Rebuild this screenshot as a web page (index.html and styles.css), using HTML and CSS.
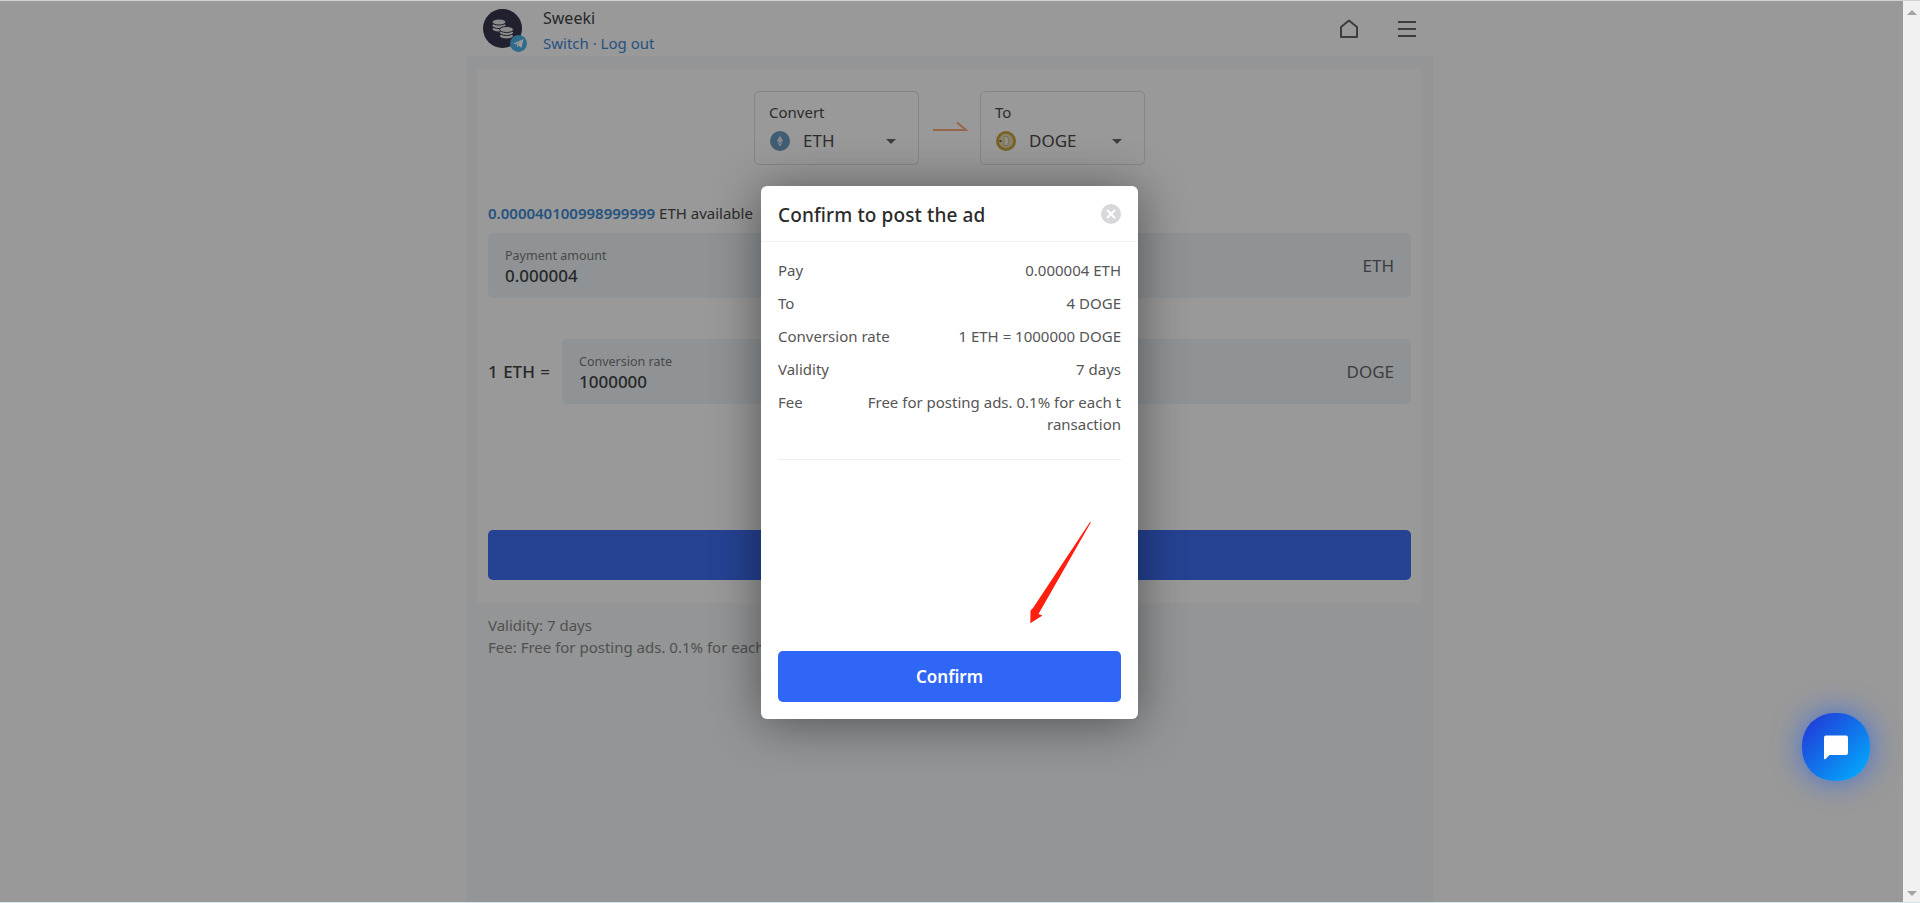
FILE: index.html
```html
<!DOCTYPE html>
<html lang="en">
<head>
    <meta charset="UTF-8">
    <meta name="viewport" content="width=device-width, initial-scale=1.0">
    <title>Confirm to post the ad</title>
    <link rel="stylesheet" href="styles.css">
</head>
<body>
    <div class="window">
        <div class="page">
            <div class="column">
                <header class="header">
                    <div class="user">
                        <div class="avatar">
                            <svg width="39" height="39" viewBox="0 0 39 39">
                                <circle cx="19.5" cy="19.5" r="19.5" fill="#36364f"/>
                                <g fill="#e8e8e8" stroke="#36364f" stroke-width="1">
                                    <ellipse cx="16" cy="20" rx="7" ry="3"/>
                                    <ellipse cx="16" cy="16.5" rx="7" ry="3"/>
                                    <ellipse cx="16" cy="13" rx="7" ry="3"/>
                                    <ellipse cx="23.5" cy="27" rx="7" ry="3"/>
                                    <ellipse cx="23.5" cy="23.5" rx="7" ry="3"/>
                                    <ellipse cx="23.5" cy="20.5" rx="7" ry="3"/>
                                </g>
                            </svg>
                            <span class="badge">
                                <svg width="11" height="11" viewBox="0 0 11 11"><path d="M0.5 5.5 L10.5 1 L8.5 10 L5.5 7.6 L4.2 9.2 L3.9 6.6 L8 3 L2.9 6.4 Z" fill="#fff"/></svg>
                            </span>
                        </div>
                        <div class="user-text">
                            <div class="user-name">Sweeki</div>
                            <div class="user-links"><a>Switch</a> · <a>Log out</a></div>
                        </div>
                    </div>
                    <div class="header-icons">
                        <svg width="18" height="20" viewBox="0 0 18 20" fill="none" stroke="#666" stroke-width="2" stroke-linejoin="round"><path d="M1 8 L9 1.5 L17 8 V18 H1 Z"/></svg>
                        <svg width="18" height="16" viewBox="0 0 18 16" stroke="#666" stroke-width="2"><path d="M0 1 H18 M0 8 H18 M0 15 H18"/></svg>
                    </div>
                </header>

                <div class="card">
                    <div class="pair">
                        <div class="select-box">
                            <div class="select-label">Convert</div>
                            <div class="select-value">
                                <svg class="coin" width="20" height="20" viewBox="0 0 20 20">
                                    <circle cx="10" cy="10" r="10" fill="#6b9cc0"/>
                                    <path d="M10 4.5 L13.2 10 L10 12 L6.8 10 Z M10 12.8 L12.8 11.2 L10 15.5 L7.2 11.2 Z" fill="#dfe7ec"/>
                                </svg>
                                <span class="coin-name">ETH</span>
                                <span class="caret"></span>
                            </div>
                        </div>
                        <svg class="pair-arrow" width="61" height="16" viewBox="0 0 61 16" fill="none" stroke="#f9ab78" stroke-width="2"><path d="M14 12 H47 L38 4.5"/></svg>
                        <div class="select-box">
                            <div class="select-label">To</div>
                            <div class="select-value">
                                <svg class="coin" width="20" height="20" viewBox="0 0 20 20">
                                    <circle cx="10" cy="10" r="10" fill="#c9a53f"/>
                                    <circle cx="10" cy="10" r="7.2" fill="#e6dcb8"/>
                                    <rect x="3.5" y="9" width="2" height="2" fill="#6b6038"/>
                                    <path d="M8 5.5 H11.5 Q14.5 10 11.5 14.5 H8 Z" fill="#f3eeda" stroke="#cdbb80" stroke-width="1"/>
                                </svg>
                                <span class="coin-name">DOGE</span>
                                <span class="caret"></span>
                            </div>
                        </div>
                    </div>

                    <div class="balance"><span class="balance-num">0.000040100998999999</span> ETH available</div>

                    <div class="field">
                        <div class="field-text">
                            <div class="field-label">Payment amount</div>
                            <div class="field-value">0.000004</div>
                        </div>
                        <span class="field-unit">ETH</span>
                    </div>

                    <div class="rate-row">
                        <span class="rate-text">1 ETH =</span>
                        <div class="field">
                            <div class="field-text">
                                <div class="field-label">Conversion rate</div>
                                <div class="field-value">1000000</div>
                            </div>
                            <span class="field-unit">DOGE</span>
                        </div>
                    </div>

                    <button class="main-btn">Post</button>
                </div>

                <div class="notes">
                    <div>Validity: 7 days</div>
                    <div>Fee: Free for posting ads. 0.1% for each transaction</div>
                </div>
            </div>

            <div class="overlay">
                <div class="modal">
                    <div class="modal-head">
                        <span class="modal-title">Confirm to post the ad</span>
                        <span class="close">
                            <svg width="10" height="10" viewBox="0 0 10 10" stroke="#fff" stroke-width="2"><path d="M1 1 L9 9 M9 1 L1 9"/></svg>
                        </span>
                    </div>
                    <div class="modal-body">
                        <div class="info-list">
                            <div class="info-row"><span>Pay</span><span>0.000004 ETH</span></div>
                            <div class="info-row"><span>To</span><span>4 DOGE</span></div>
                            <div class="info-row"><span>Conversion rate</span><span>1 ETH = 1000000 DOGE</span></div>
                            <div class="info-row"><span>Validity</span><span>7 days</span></div>
                            <div class="info-row"><span>Fee</span><span class="info-fee">Free for posting ads. 0.1% for each transaction</span></div>
                        </div>
                        <button class="confirm-btn">Confirm</button>
                    </div>
                    <svg class="red-arrow" width="64" height="104" viewBox="0 0 64 104"><path d="M61 0 L4 86 L1.5 88.5 L1.3 101.3 L13.5 93.5 L9.5 92 L61.8 0.6 Z" fill="#ff1f0f"/></svg>
                </div>
            </div>

            <div class="chat">
                <svg width="26" height="25" viewBox="0 0 26 25"><path d="M3 0.5 H23 Q25 0.5 25 2.5 V18 Q25 20 23 20 H6.5 L2.5 24 Q1 25 1 23 V2.5 Q1 0.5 3 0.5 Z" fill="#fff"/></svg>
            </div>
        </div>
        <aside class="scrollbar">
            <span class="scroll-up"></span>
            <span class="scroll-down"></span>
        </aside>
    </div>
</body>
</html>
```

FILE: styles.css
```css
* {
    box-sizing: border-box;
}
body {
    margin: 0;
    height: 903px;
    overflow: hidden;
    font-family: "Noto Sans", Arial, sans-serif;
    font-size: 15px;
    color: #4a4a4a;
    background-color: #fff;
}
.window {
    display: flex;
    height: 903px;
    border-top: 1px solid #d2d2d2;
    border-bottom: 1px solid #d5e6ef;
}
.page {
    position: relative;
    flex: 1;
    overflow: hidden;
}
.scrollbar {
    width: 17px;
    background-color: #f1f1f1;
    display: flex;
    flex-direction: column;
    justify-content: space-between;
    align-items: center;
    padding: 9px 0 6px;
}
.scroll-up, .scroll-down {
    width: 0;
    height: 0;
    border-left: 5px solid transparent;
    border-right: 5px solid transparent;
}
.scroll-up {
    border-bottom: 5px solid #a3a3a3;
}
.scroll-down {
    border-top: 5px solid #a3a3a3;
}
.column {
    width: 967px;
    height: 100%;
    margin-left: 466px;
    background-color: #f5f8fa;
}
.header {
    display: flex;
    justify-content: space-between;
    align-items: center;
    height: 55px;
    padding: 0 17px;
    background-color: #fff;
}
.user {
    display: flex;
    align-items: center;
}
.avatar {
    position: relative;
    width: 39px;
    height: 39px;
    margin-right: 21px;
}
.badge {
    position: absolute;
    right: -5px;
    bottom: -4px;
    width: 17px;
    height: 17px;
    border-radius: 50%;
    background-color: #4fb2e6;
    display: flex;
    align-items: center;
    justify-content: center;
}
.user-text {
    padding-top: 3px;
}
.user-name {
    font-size: 16px;
    line-height: 26px;
    color: #444;
}
.user-links {
    font-size: 15px;
    line-height: 25px;
    color: #3e8ad6;
}
.header-icons {
    display: flex;
    align-items: center;
    gap: 40px;
}
.card {
    margin: 13px 11px 0;
    padding: 22px 11px 23px;
    background-color: #fff;
    border-radius: 4px;
}
.pair {
    display: flex;
    justify-content: center;
}
.select-box {
    width: 165px;
    height: 74px;
    padding: 9px 14px;
    border: 1px solid #dcdfe3;
    border-radius: 5px;
}
.select-label {
    font-size: 15px;
    line-height: 22px;
}
.select-value {
    display: flex;
    align-items: center;
    margin-top: 8px;
    padding-left: 1px;
}
.coin {
    flex-shrink: 0;
}
.coin-name {
    flex: 1;
    margin-left: 13px;
    font-size: 17px;
    line-height: 20px;
}
.caret {
    width: 0;
    height: 0;
    margin-right: 8px;
    border-left: 5px solid transparent;
    border-right: 5px solid transparent;
    border-top: 5px solid #666;
}
.pair-arrow {
    margin-top: 27px;
}
.balance {
    margin-top: 37px;
    line-height: 22px;
}
.balance-num {
    font-weight: 600;
    color: #3e8ad6;
}
.field {
    flex: 1;
    display: flex;
    justify-content: space-between;
    align-items: center;
    height: 65px;
    margin-top: 9px;
    padding: 0 17px;
    background-color: #eef5f9;
    border-radius: 5px;
}
.field-text {
    padding-top: 2px;
}
.field-label {
    font-size: 12.5px;
    line-height: 17px;
    color: #7a7a7a;
}
.field-value {
    font-size: 17px;
    font-weight: 500;
    line-height: 23px;
    color: #444;
}
.field-unit {
    font-size: 17px;
    color: #666;
}
.rate-row {
    display: flex;
    align-items: center;
    margin-top: 41px;
}
.rate-row .field {
    margin-top: 0;
}
.rate-text {
    flex-shrink: 0;
    width: 74px;
    font-size: 17px;
    font-weight: 500;
    word-spacing: 1px;
    color: #444;
}
.main-btn {
    display: block;
    width: 100%;
    height: 50px;
    margin-top: 126px;
    border: none;
    border-radius: 5px;
    background-color: #3f6ef5;
    color: #fff;
    font-family: inherit;
    font-size: 16px;
}
.notes {
    margin: 11px 11px 0 22px;
    line-height: 22px;
    color: #888;
}
.overlay {
    position: absolute;
    top: 0;
    left: 0;
    right: 0;
    bottom: 0;
    padding: 2px 4px 0 0;
    background-color: rgba(0, 0, 0, 0.4);
    display: flex;
    align-items: center;
    justify-content: center;
}
.modal {
    position: relative;
    display: flex;
    flex-direction: column;
    width: 377px;
    height: 533px;
    background-color: #fff;
    border-radius: 6px;
    box-shadow: 0 4px 50px rgba(0, 0, 0, 0.45);
}
.modal-head {
    display: flex;
    justify-content: space-between;
    align-items: center;
    height: 56px;
    padding: 0 17px;
    border-bottom: 1px solid #f4f4f4;
}
.modal-title {
    margin-top: 2px;
    font-size: 19px;
    font-weight: 500;
    letter-spacing: 0.12px;
    color: #2b2b2b;
}
.close {
    width: 20px;
    height: 20px;
    border-radius: 50%;
    background-color: #d8d8da;
    display: flex;
    align-items: center;
    justify-content: center;
}
.modal-body {
    flex: 1;
    display: flex;
    flex-direction: column;
    justify-content: space-between;
    padding: 17px 17px 17px;
}
.info-list {
    padding-bottom: 12px;
    border-bottom: 1px solid #eee;
}
.info-row {
    display: flex;
    justify-content: space-between;
    margin-bottom: 11px;
    line-height: 22px;
    color: #555;
}
.info-row:last-child {
    margin-bottom: 12px;
}
.info-fee {
    width: 255px;
    text-align: right;
    word-break: break-all;
}
.confirm-btn {
    height: 51px;
    border: none;
    border-radius: 5px;
    background-color: #2f66f6;
    color: #fff;
    font-family: inherit;
    font-size: 17px;
    font-weight: 600;
}
.red-arrow {
    position: absolute;
    left: 268px;
    top: 336px;
}
.chat {
    position: absolute;
    top: 712px;
    right: 33px;
    width: 68px;
    height: 68px;
    border-radius: 32px;
    background: linear-gradient(135deg, #2330d6, #00b4ff);
    box-shadow: 0 0 30px rgba(20, 90, 255, 0.65);
    display: flex;
    align-items: center;
    justify-content: center;
}
```
